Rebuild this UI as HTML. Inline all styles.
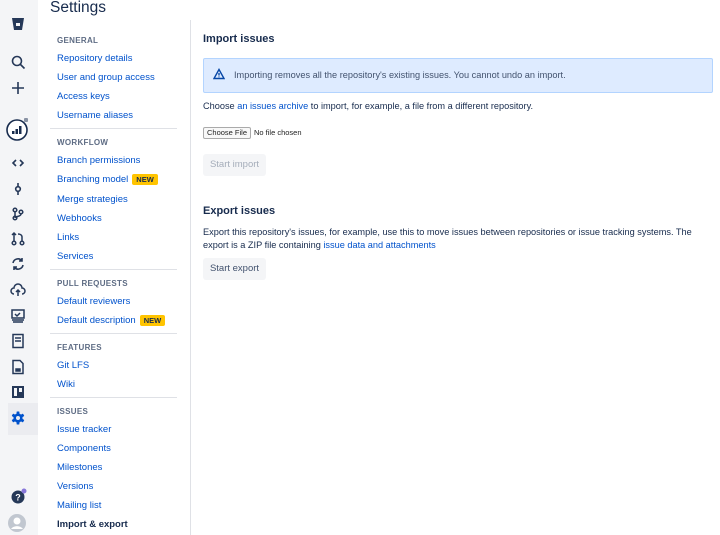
<!DOCTYPE html>
<html><head><style>
*{margin:0;padding:0;box-sizing:border-box}
body{width:720px;height:535px;overflow:hidden;background:#fff;font-family:"Liberation Sans",sans-serif;position:relative;color:#172b4d}
.side{position:absolute;left:0;top:0;width:38px;height:535px;background:#f4f5f7}
.ic{position:absolute;left:9px;width:18px;height:18px}
.t{position:absolute;white-space:nowrap}
.h{font-size:8px;font-weight:bold;color:#5e6c84;letter-spacing:.3px;left:57px}
.l{font-size:9.5px;color:#0052cc;left:57px}
.hr{position:absolute;left:50px;width:127px;height:1px;background:#dfe1e6}
.new{background:#ffc400;color:#172b4d;font-size:7.5px;font-weight:bold;padding:1px 4px;border-radius:2px;margin-left:4px}
.m{font-size:9.2px;color:#172b4d;left:203px}
a{color:#0052cc}
</style></head><body>
<div class="side"></div>
<div style="position:absolute;left:8px;top:403px;width:30px;height:32px;background:#ebecf0"></div>
<svg class="ic" style="top:15px" viewBox="0 0 18 18"><path d="M3 3h12l-2 12H5z" fill="#253858"/><rect x="7" y="8" width="4" height="3" fill="#f4f5f7"/></svg>
<svg class="ic" style="top:53px" viewBox="0 0 18 18" fill="none" stroke="#253858" stroke-width="1.6"><circle cx="8" cy="8" r="4.5"/><path d="M11.5 11.5l4 4"/></svg>
<svg class="ic" style="top:79px" viewBox="0 0 18 18" stroke="#253858" stroke-width="1.6"><path d="M9 3v12M3 9h12"/></svg>
<svg style="position:absolute;left:5px;top:116px;width:26px;height:26px" viewBox="0 0 26 26"><circle cx="12" cy="14" r="10" fill="#fff" stroke="#172b4d" stroke-width="1.6"/><rect x="7" y="15" width="2.5" height="3" fill="#172b4d"/><rect x="10.5" y="13" width="2.5" height="5" fill="#172b4d"/><rect x="14" y="10" width="2.5" height="8" fill="#172b4d"/><rect x="19" y="2" width="4" height="4" rx="1" fill="#8993a4"/></svg>
<svg class="ic" style="top:154px" viewBox="0 0 18 18" fill="none" stroke="#253858" stroke-width="1.6"><path d="M7 6l-3 3 3 3M11 6l3 3-3 3"/></svg>
<svg class="ic" style="top:180px" viewBox="0 0 18 18" fill="none" stroke="#253858" stroke-width="1.6"><path d="M9 3v12"/><circle cx="9" cy="9" r="2.3" fill="#f4f5f7"/></svg>
<svg class="ic" style="top:205px" viewBox="0 0 18 18" fill="none" stroke="#253858" stroke-width="1.5"><circle cx="6" cy="5" r="1.8"/><circle cx="6" cy="13" r="1.8"/><circle cx="12" cy="7" r="1.8"/><path d="M6 7v4M12 9c0 3-6 2-6 4"/></svg>
<svg class="ic" style="top:230px" viewBox="0 0 18 18" fill="none" stroke="#253858" stroke-width="1.5"><circle cx="5" cy="13" r="1.8"/><circle cx="13" cy="13" r="1.8"/><path d="M5 11V3M3 5l2-2 2 2M13 11V7c0-2-2-3-4-3"/></svg>
<svg class="ic" style="top:255px" viewBox="0 0 18 18" fill="none" stroke="#253858" stroke-width="1.6"><path d="M4 8a5 5 0 0 1 9-2M14 10a5 5 0 0 1-9 2M13 3v3h-3M5 15v-3h3"/></svg>
<svg class="ic" style="top:281px" viewBox="0 0 18 18" fill="none" stroke="#253858" stroke-width="1.5"><path d="M5 13a3 3 0 0 1 0-6 4 4 0 0 1 8 0 3 3 0 0 1 0 6M9 15V9M7 11l2-2 2 2"/></svg>
<svg class="ic" style="top:307px" viewBox="0 0 18 18" fill="none" stroke="#253858" stroke-width="1.5"><rect x="3" y="3" width="12" height="8"/><path d="M6 7l2 2 3-3M3 13h12M4 15h10"/></svg>
<svg class="ic" style="top:332px" viewBox="0 0 18 18" fill="none" stroke="#253858" stroke-width="1.5"><rect x="4" y="2.5" width="10" height="13"/><path d="M6 6h6M6 9h6"/></svg>
<svg class="ic" style="top:358px" viewBox="0 0 18 18" fill="none" stroke="#253858" stroke-width="1.5"><path d="M4 2.5h7l3 3v10H4z"/><path d="M7 11h4v2H7z" fill="#253858"/></svg>
<svg class="ic" style="top:383px" viewBox="0 0 18 18"><rect x="3" y="3" width="12" height="12" fill="#253858"/><rect x="5" y="5" width="3" height="8" fill="#f4f5f7"/><rect x="10" y="5" width="3" height="4" fill="#f4f5f7"/></svg>
<svg class="ic" style="top:409px" viewBox="0 0 18 18"><g fill="#0052cc" transform="translate(9 9)"><rect x="-1.4" y="-6.5" width="2.8" height="13" rx=".5"/><rect x="-1.4" y="-6.5" width="2.8" height="13" rx=".5" transform="rotate(60)"/><rect x="-1.4" y="-6.5" width="2.8" height="13" rx=".5" transform="rotate(120)"/><circle r="4.6"/><circle r="2" fill="#ebecf0"/></g></svg>
<svg class="ic" style="top:488px" viewBox="0 0 18 18"><circle cx="9" cy="9" r="6.5" fill="#253858"/><text x="9" y="12.5" font-size="9" font-weight="bold" fill="#fff" text-anchor="middle" font-family="Liberation Sans">?</text><circle cx="15" cy="3" r="2.5" fill="#8777d9"/></svg>
<svg style="position:absolute;left:7px;top:513px;width:20px;height:20px" viewBox="0 0 20 20"><circle cx="10" cy="10" r="9" fill="#c1c7d0"/><circle cx="10" cy="8" r="3.5" fill="#fff"/><path d="M4 16a7 6 0 0 1 12 0z" fill="#fff"/></svg>

<div class="t" style="left:50px;top:-1px;font-size:15.5px;color:#172b4d">Settings</div>
<div style="position:absolute;left:190px;top:20px;width:1px;height:515px;background:#dfe1e6"></div>

<div class="t h" style="top:36px">GENERAL</div>
<div class="t l" style="top:53px">Repository details</div>
<div class="t l" style="top:72px">User and group access</div>
<div class="t l" style="top:91px">Access keys</div>
<div class="t l" style="top:110px">Username aliases</div>
<div class="hr" style="top:128px"></div>
<div class="t h" style="top:138px">WORKFLOW</div>
<div class="t l" style="top:155px">Branch permissions</div>
<div class="t l" style="top:174px">Branching model<span class="new">NEW</span></div>
<div class="t l" style="top:194px">Merge strategies</div>
<div class="t l" style="top:213px">Webhooks</div>
<div class="t l" style="top:232px">Links</div>
<div class="t l" style="top:251px">Services</div>
<div class="hr" style="top:269px"></div>
<div class="t h" style="top:279px">PULL REQUESTS</div>
<div class="t l" style="top:296px">Default reviewers</div>
<div class="t l" style="top:315px">Default description<span class="new">NEW</span></div>
<div class="hr" style="top:333px"></div>
<div class="t h" style="top:343px">FEATURES</div>
<div class="t l" style="top:360px">Git LFS</div>
<div class="t l" style="top:379px">Wiki</div>
<div class="hr" style="top:397px"></div>
<div class="t h" style="top:407px">ISSUES</div>
<div class="t l" style="top:424px">Issue tracker</div>
<div class="t l" style="top:443px">Components</div>
<div class="t l" style="top:462px">Milestones</div>
<div class="t l" style="top:481px">Versions</div>
<div class="t l" style="top:500px">Mailing list</div>
<div class="t l" style="top:519px;color:#172b4d;font-weight:bold">Import &amp; export</div>

<div class="t" style="left:203px;top:33px;font-size:11px;font-weight:bold">Import issues</div>
<div style="position:absolute;left:203px;top:58px;width:510px;height:35px;background:#deebff;border:1px solid #b3d4ff;border-radius:2px"></div>
<svg style="position:absolute;left:213px;top:68px;width:12px;height:12px" viewBox="0 0 12 12" fill="none" stroke="#0747a6" stroke-width="1.4"><path d="M6 1.5L11 10.5H1z"/><path d="M6 5v2.5M6 8.5v.8"/></svg>
<div class="t m" style="left:234px;top:70px;color:#42526e">Importing removes all the repository's existing issues. You cannot undo an import.</div>
<div class="t m" style="top:101px">Choose <a>an issues archive</a> to import, for example, a file from a different repository.</div>
<div style="position:absolute;left:203px;top:127px;width:48px;height:12px;border:1px solid #aaa;border-radius:2px;background:#f8f8f8;font-size:7.5px;text-align:center;line-height:10px;color:#222">Choose File</div>
<div class="t" style="left:254px;top:128px;font-size:7.5px;color:#222">No file chosen</div>
<div style="position:absolute;left:203px;top:154px;width:63px;height:22px;background:#f4f5f7;border-radius:3px;font-size:9.5px;color:#a5adba;text-align:center;line-height:22px">Start import</div>
<div class="t" style="left:203px;top:205px;font-size:11px;font-weight:bold">Export issues</div>
<div class="t m" style="top:227px">Export this repository's issues, for example, use this to move issues between repositories or issue tracking systems. The</div>
<div class="t m" style="top:240px">export is a ZIP file containing <a>issue data and attachments</a></div>
<div style="position:absolute;left:203px;top:258px;width:63px;height:22px;background:#f4f5f7;border-radius:3px;font-size:9.5px;color:#42526e;text-align:center;line-height:22px">Start export</div>
</body></html>
